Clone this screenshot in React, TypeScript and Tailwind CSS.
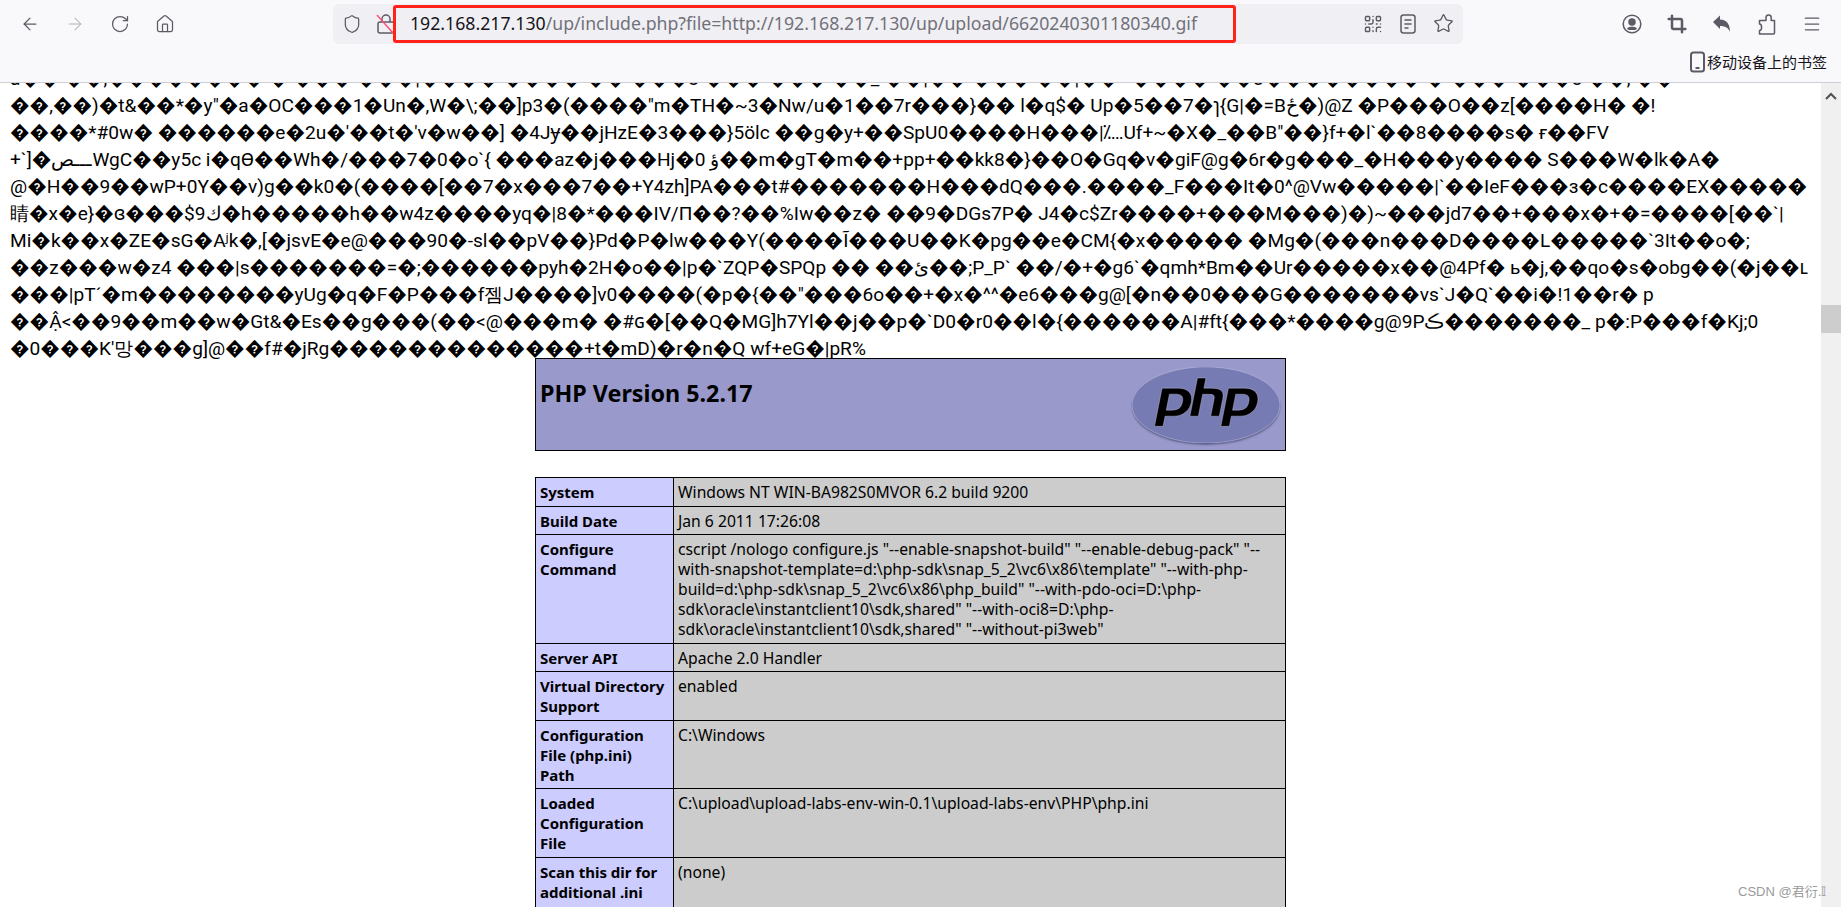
import React from 'react';
import { ArrowLeft, ArrowRight, RotateCw, House, Shield, Star, Menu, Crop, QrCode } from 'lucide-react';
import { SiPhp } from 'react-icons/si';

const garbled = [
  'a�� ��,�������� � ��� ���|���� ���� �� ���J ���-��� ��_ ��|�� ��� ��|��~���� ��J�������� � ��� ���J ��, ��',
  '��,��)�t&��*�y"�a�OC���1�Un�,W�\\;��]p3�(����"m�TH�~3�Nw/u�1��7r���}�� l�q$� Up�5��7�ɿ{G|�=Bځ�)@Z �P���O��z[����H� �!',
  '����*#0w� ������e�2u�\'��t�\'v�w��] �4Jɏ��jHzE�3���}5ölc ��g�y+��SpU0����H���|⁒…Uf+~�X�_��B"��}f+�l`��8����s� ғ��FV',
  '+`]�ـــصWgC��y5c i�qѲ��Wh�/���7�0�o`{ ���az�j���Hj�0 ؤ��m�gT�m��+pp+��kk8�}��O�Gq�v�giF@g�6r�g���_�H���y���� S���W�lk�A�',
  '@�H��9��wP+0Y��v)g��k0�(����[��7�x���7��+Y4zh]PA���t#�������H���dQ���.����_F���It�0^@Vw�����|`��IeF���з�c����EX�����',
  '睛�x�e}�ɞ���$9ك�h�����h��w4z����yq�|8�*���IV/Π��?��%Iw��z� ��9�DGs7P� J4�c$Zr����+���M���)�)~���jd7��+���x�+�=����[��`|',
  'Mi�k��x�ZE�sG�Aʲk�,[�jsvE�e@���90�-sl��pV��}Pd�P�lw���Y(����Ĩ���U��K�pg��e�CM{�x����� �Mg�(���n���D����L�����`3It��o�;',
  '��z���w�z4 ���|s�������=�;������pyh�2H�o��|p�`ZQP�SPQp �� ��ئ��;P_P` ��/�+�g6`�qmh*Bm��Ur�����x��@4Pf� ь�j,��qo�s�obg��(�j��ʟ',
  '���|pT´�m��������yUg�q�F�P���f젬J����]v0����(�p�{��"���6o��+�x�^^�e6���g@[�n��0���G�������vs`J�Q`��i�!1��r� p',
  '��Ậ<��9��m��w�Gt&�Es��g���(��<@���m� �#ɢ�[��Q�MG]h7Yl��j��p�`D0�r0��l�{������A|#ft{���*����g@9Pڪ�������_ p�:P���f�Kj;0',
  '�0���K\'망���g]@��f#�jRg�������������+t�mD)�r�n�Q wf+eG�|pR%',
];

const rows: { label: React.ReactNode; value: React.ReactNode; h: string }[] = [
  { label: 'System', value: 'Windows NT WIN-BA982S0MVOR 6.2 build 9200', h: 'h-[29px]' },
  { label: 'Build Date', value: 'Jan 6 2011 17:26:08', h: 'h-[28px]' },
  {
    label: <>Configure<br />Command</>,
    value: <>cscript /nologo configure.js "--enable-snapshot-build" "--enable-debug-pack" "--<br />with-snapshot-template=d:\php-sdk\snap_5_2\vc6\x86\template" "--with-php-<br />build=d:\php-sdk\snap_5_2\vc6\x86\php_build" "--with-pdo-oci=D:\php-<br />sdk\oracle\instantclient10\sdk,shared" "--with-oci8=D:\php-<br />sdk\oracle\instantclient10\sdk,shared" "--without-pi3web"</>,
    h: 'h-[109px]',
  },
  { label: 'Server API', value: 'Apache 2.0 Handler', h: 'h-[28px]' },
  { label: <>Virtual Directory<br />Support</>, value: 'enabled', h: 'h-[49px]' },
  { label: <>Configuration<br />File (php.ini)<br />Path</>, value: 'C:\\Windows', h: 'h-[68px]' },
  { label: <>Loaded<br />Configuration<br />File</>, value: 'C:\\upload\\upload-labs-env-win-0.1\\upload-labs-env\\PHP\\php.ini', h: 'h-[69px]' },
  { label: <>Scan this dir for<br />additional .ini<br />Files</>, value: '(none)', h: 'h-[68px]' },
];

const ProfileIcon = () => (
  <svg width="20" height="20" viewBox="0 0 20 20" fill="none" stroke="#5b5b66" strokeWidth="1.5">
    <circle cx="10" cy="10" r="8.8" />
    <circle cx="10" cy="8" r="3" fill="#5b5b66" />
    <path d="M5 14.5c1-2.2 9-2.2 10 0l-1.5 1.5h-7z" fill="#5b5b66" stroke="none" />
  </svg>
);

const ReplyIcon = () => (
  <svg width="20" height="20" viewBox="0 0 20 20" fill="#5b5b66">
    <path d="M1 8l7-6.5v4c6 .2 10 3.500 10 12.500-1.500-4-4.500-6-10-6v3z" />
  </svg>
);

const ReaderIcon = () => (
  <svg width="18" height="20" viewBox="0 0 18 20" fill="none" stroke="#5b5b66" strokeWidth="1.5">
    <rect x="2" y="1" width="14" height="18" rx="2.500" />
    <path d="M5.500 6h7M5.500 10h7M5.500 14h4" />
  </svg>
);

const PuzzleIcon = () => (
  <svg width="20" height="22" viewBox="0 0 20 22" fill="none" stroke="#5b5b66" strokeWidth="1.5" strokeLinejoin="round">
    <path d="M2.500 11V7.500h6.500V4.500a2.600 2.600 0 0 1 5.200 0v3h3.300v12.500a1 1 0 0 1-1 1H2.500v-3.500c2.800 0 2.800-6.500 0-6.500z" />
  </svg>
);

const App: React.FC = () => {
  return (
    <div className="w-[1841px] h-[907px] overflow-hidden flex flex-col bg-white text-black font-['Noto_Sans',sans-serif]">
      {/* Browser toolbar */}
      <header className="h-[83px] shrink-0 bg-[#f9f9fb] border-b border-[#cfcfd8] flex flex-col">
        <div className="h-[45px] flex items-center pt-[2px] text-[#5b5b66]">
          <div className="w-[333px] flex items-center gap-[25px] pl-5">
            <ArrowLeft size={20} strokeWidth={1.5} />
            <ArrowRight size={20} strokeWidth={1.25} className="text-[#b4b4ba]" />
            <RotateCw size={20} strokeWidth={1.5} />
            <House size={20} strokeWidth={1.5} />
          </div>
          <div className="relative w-[1130px] h-[40px] rounded-md bg-[#f0f0f4] flex items-center pl-[9px] pr-[9px]">
            <Shield size={20} strokeWidth={1.5} />
            <div className="relative ml-[14px]">
              <svg width="20" height="22" viewBox="0 0 20 22" fill="none" stroke="#5b5b66" strokeWidth="1.500">
                <rect x="2" y="9" width="16" height="11" rx="2" />
                <path d="M6 9V6a4 4 0 0 1 8 0v3" />
                <path d="M1 2l16 18" stroke="#ff4f7a" />
              </svg>
            </div>
            <span className="ml-[14px] text-[17.7px] leading-none whitespace-nowrap text-[#71717a]">
              <span className="text-[#15141a]">192.168.217.130</span>/up/include.php?file=http://192.168.217.130/up/upload/6620240301180340.gif
            </span>
            <div className="ml-auto flex items-center gap-[16px]">
              <QrCode size={20} strokeWidth={1.75} />
              <ReaderIcon />
              <Star size={21} strokeWidth={1.5} />
            </div>
            <div className="absolute left-[60px] top-[1px] w-[843px] h-[38px] rounded-[3px] border-[3px] border-[#ff2318]" />
          </div>
          <div className="flex-1 flex items-center gap-[25px] pl-[159px]">
            <ProfileIcon />
            <Crop size={20} strokeWidth={3} />
            <ReplyIcon />
            <PuzzleIcon />
            <Menu size={20} strokeWidth={1.5} />
          </div>
        </div>
        <div className="flex-1 flex items-center justify-end pr-[14px] pb-[3px]">
          <svg width="15" height="22" viewBox="0 0 15 22" className="mr-[2px]" fill="none" stroke="#5b5b66" strokeWidth="2">
            <rect x="1" y="1.500" width="13" height="19" rx="2.500" />
            <path d="M5.500 17h4" />
          </svg>
          <span className="text-[15px] font-['Noto_Sans_CJK_SC',sans-serif] text-[#15141a]">移动设备上的书签</span>
        </div>
      </header>

      <div className="relative flex-1 flex min-h-0">
        <main className="flex-1 min-w-0 overflow-hidden">
          {/* Garbled gif bytes echoed by the include */}
          <div className="-mt-[18px] px-[10px] text-[19.1px] leading-[27px] whitespace-nowrap font-['Roboto','Noto_Sans',sans-serif] [unicode-bidi:bidi-override]">
            {garbled.map((line, i) => (
              <div key={i}>{line}</div>
            ))}
          </div>

          <div className="-mt-[4px] w-[751px] mx-auto text-[15.7px] leading-[20px]">
            <div className="h-[93px] border border-black bg-[#9999cc] flex justify-between pl-[4px] pr-[5px]">
              <h1 className="mt-[19px] text-[23.3px] leading-[30px] font-bold">PHP Version 5.2.17</h1>
              <div className="relative mt-[8px] w-[148px] h-[76px]">
                <div className="absolute inset-0 rounded-[50%] shadow-[0_2px_2px_rgba(50,50,90,0.55)]" />
                <div className="absolute inset-[3px] rounded-[50%] bg-black" />
                <SiPhp
                  className="absolute inset-0 w-full h-full text-[#777bb3]"
                  viewBox="0 5.7 24 12.6"
                  preserveAspectRatio="none"
                  stroke="#d8d8ee"
                  strokeWidth="0.06"
                />
              </div>
            </div>

            <div className="mt-[26px] border-t border-l border-r border-black">
              {rows.map((row, i) => (
                <div key={i} className={`grid grid-cols-[138px_1fr] border-b border-black ${row.h}`}>
                  <div className="bg-[#ccccff] border-r border-black px-[4px] pt-[4px] text-[15px] font-bold">{row.label}</div>
                  <div className="bg-[#cccccc] px-[4px] pt-[4px] whitespace-nowrap">{row.value}</div>
                </div>
              ))}
            </div>
          </div>
        </main>

        {/* Scrollbar */}
        <div className="w-5 shrink-0 bg-[#f0f0f0] flex flex-col items-center">
          <svg width="12" height="8" viewBox="0 0 12 8" className="mt-[9px]" fill="none" stroke="#505050" strokeWidth="2">
            <path d="M1 7l5-5 5 5" />
          </svg>
          <div className="mt-[205px] w-full h-[28px] bg-[#cdcdcd]" />
        </div>

        <span className="absolute left-[1738px] bottom-[5px] text-[13px] leading-[20px] text-[#9a9a9a] whitespace-nowrap font-['Liberation_Sans','Noto_Sans_CJK_SC',sans-serif]">
          CSDN @君衍.𝕀
        </span>
      </div>
    </div>
  );
};

export default App;
